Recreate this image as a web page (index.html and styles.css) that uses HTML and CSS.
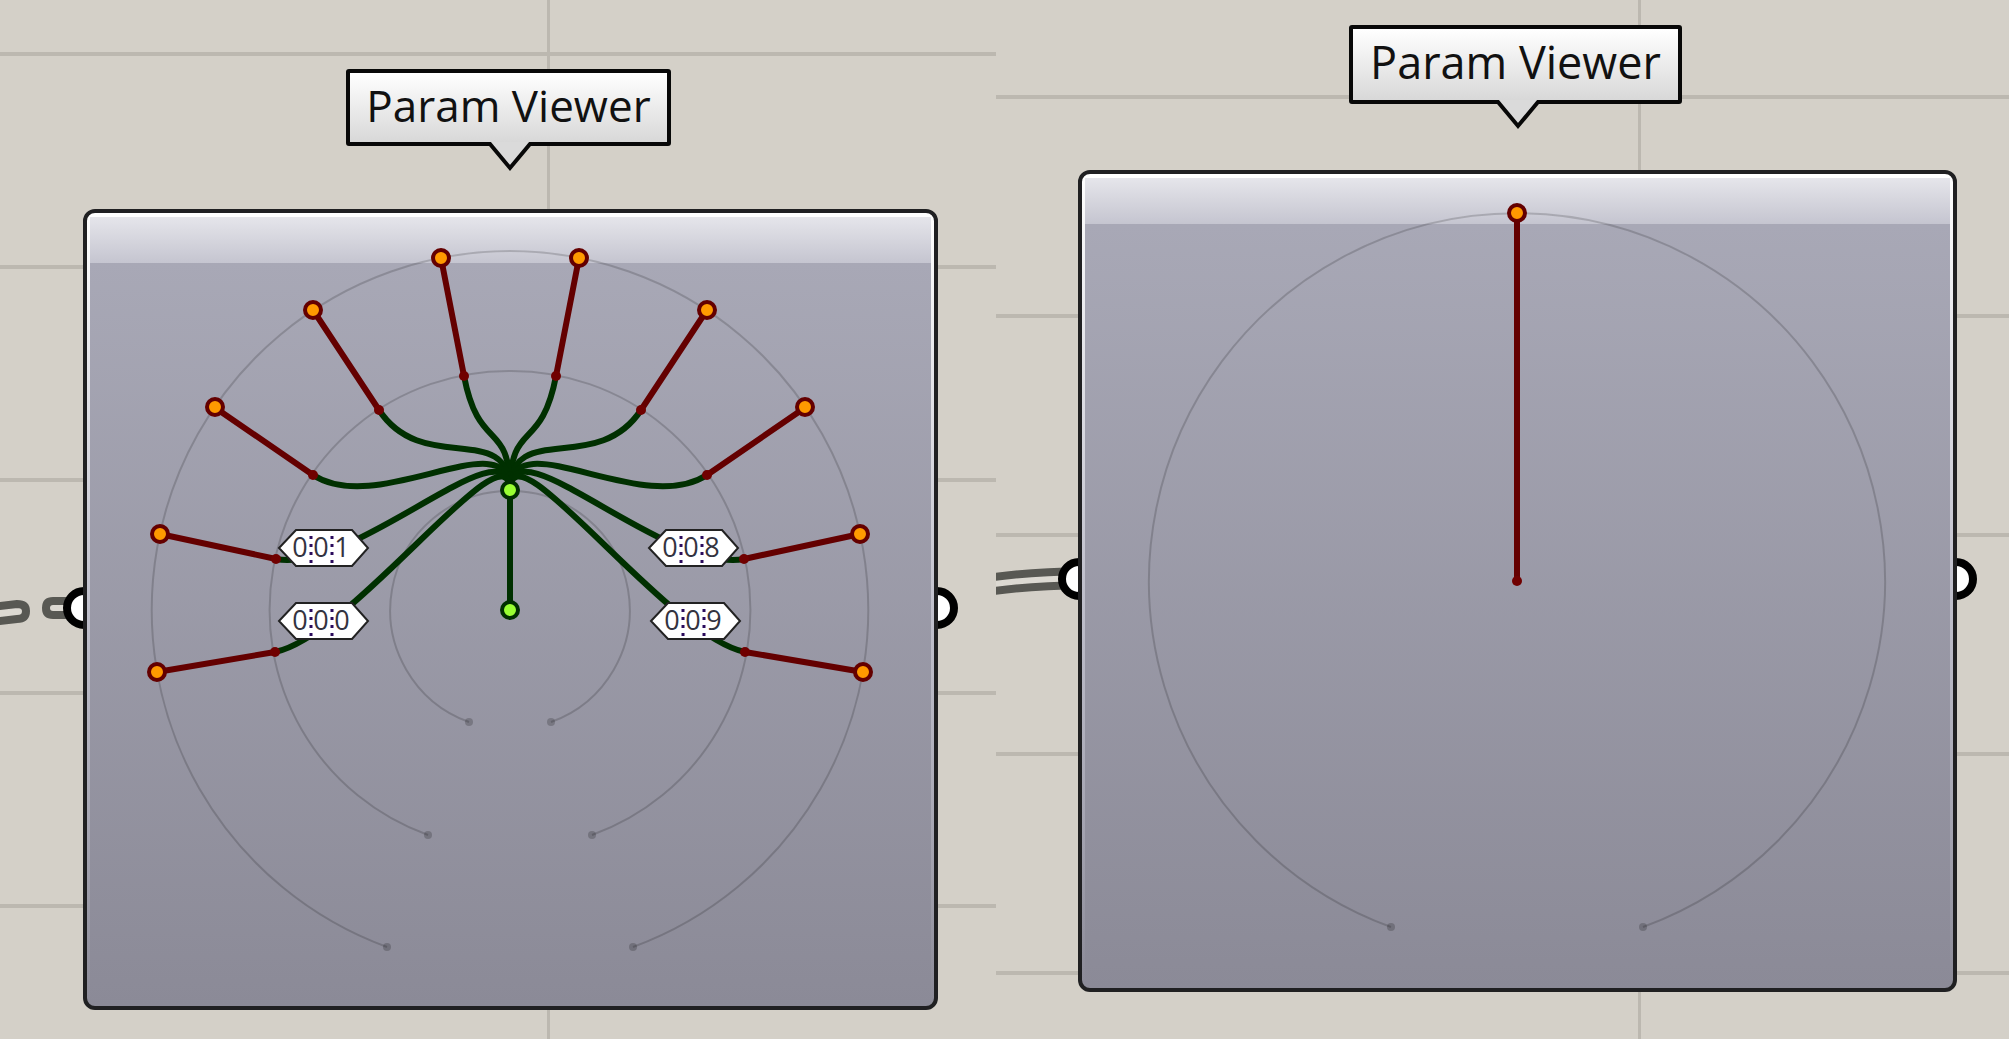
FILE: index.html
```html
<!DOCTYPE html>
<html lang="en">
<head>
<meta charset="utf-8">
<title>Param Viewer</title>
<link rel="stylesheet" href="styles.css">
</head>
<body>
<main class="board">
  <section class="pane pane-tree">
    <h2 class="callout">Param Viewer
      <svg class="pointer" viewBox="0 0 48 32" aria-hidden="true">
        <path class="pointer-fill" d="M4 0V2L24 26L44 2V0Z"/>
        <path class="pointer-edge" d="M2 2H4L24 26L44 2H46"/>
      </svg>
    </h2>
    <div class="node">
      <svg class="wire" viewBox="0 0 83 60" aria-hidden="true">
        <path d="M-8 28L17 25Q26 25 26 32Q26 40 17 40L-8 43Z"/>
        <path d="M90 22H53Q46 22 46 29Q46 36 53 36H90Z"/>
      </svg>
      <span class="port port-in"></span>
      <span class="port port-out"></span>
      <div class="card">
        <svg class="diagram" viewBox="87 212 847 793" role="img" aria-label="Data tree with ten branches">
          <defs>
            <g id="half">
              <path class="ring" d="M510 250A359 359 0 0 1 633 946M510 370A239 239 0 0 1 592 834M510 490A119 119 0 0 1 551 721"/>
              <g class="ring-end">
                <circle cx="633" cy="946" r="4"/><circle cx="592" cy="834" r="4"/><circle cx="551" cy="721" r="4"/>
              </g>
              <g class="branch">
                <path d="M510 490C510 418 541 453 556 375"/>
                <path d="M510 490C510 418 597 476 641 409"/>
                <path d="M510 490C510 418 641 517 707 474"/>
                <path d="M510 490C510 418 665 573 744 558"/>
                <path d="M510 490C510 418 666 635 745 651"/>
              </g>
              <path class="leaf" d="M556 375L579 257M641 409L707 309M707 474L806 406M744 558L860 533M745 651L863 671"/>
              <g class="joint">
                <circle cx="556" cy="375" r="5"/><circle cx="641" cy="409" r="5"/><circle cx="707" cy="474" r="5"/><circle cx="744" cy="558" r="5"/><circle cx="745" cy="651" r="5"/>
              </g>
              <g class="leaf-dot">
                <circle cx="579" cy="257" r="8"/><circle cx="707" cy="309" r="8"/><circle cx="805" cy="406" r="8"/><circle cx="860" cy="533" r="8"/><circle cx="863" cy="671" r="8"/>
              </g>
            </g>
            <g id="tag">
              <path class="tag-shape" d="M1 19L18 1H74L90 19L74 37H18Z"/>
              <path class="tag-split" d="M33 7V34M54 7V34"/>
            </g>
          </defs>
          <use href="#half"/>
          <use href="#half" transform="translate(1020 0) scale(-1 1)"/>
          <path class="trunk" d="M510 490V609"/>
          <circle class="trunk-dot" cx="510" cy="489" r="8"/>
          <circle class="trunk-dot" cx="510" cy="609" r="8"/>
          <g transform="translate(278 528)"><use href="#tag"/><text class="tag-text" y="28"><tspan x="22">0</tspan><tspan x="43">0</tspan><tspan x="64">1</tspan></text></g>
          <g transform="translate(278 601)"><use href="#tag"/><text class="tag-text" y="28"><tspan x="22">0</tspan><tspan x="43">0</tspan><tspan x="64">0</tspan></text></g>
          <g transform="translate(648 528)"><use href="#tag"/><text class="tag-text" y="28"><tspan x="22">0</tspan><tspan x="43">0</tspan><tspan x="64">8</tspan></text></g>
          <g transform="translate(650 601)"><use href="#tag"/><text class="tag-text" y="28"><tspan x="22">0</tspan><tspan x="43">0</tspan><tspan x="64">9</tspan></text></g>
        </svg>
      </div>
    </div>
  </section>

  <section class="pane pane-item">
    <h2 class="callout">Param Viewer
      <svg class="pointer" viewBox="0 0 48 32" aria-hidden="true">
        <path class="pointer-fill" d="M4 0V2L24 26L44 2V0Z"/>
        <path class="pointer-edge" d="M2 2H4L24 26L44 2H46"/>
      </svg>
    </h2>
    <div class="node">
      <svg class="wire" viewBox="0 0 83 60" aria-hidden="true">
        <path d="M-8 28Q30 22 90 21V35Q30 36 -8 42Z"/>
      </svg>
      <span class="port port-in"></span>
      <span class="port port-out"></span>
      <div class="card">
        <svg class="diagram" viewBox="1082 174 871 814" role="img" aria-label="Single item">
          <path class="ring" d="M1391 927A368 368 0 1 1 1643 927"/>
          <g class="ring-end"><circle cx="1391" cy="927" r="4"/><circle cx="1643" cy="927" r="4"/></g>
          <path class="leaf" d="M1517 213V581"/>
          <circle class="joint" cx="1517" cy="581" r="5"/>
          <g class="leaf-dot"><circle cx="1517" cy="213" r="8"/></g>
        </svg>
      </div>
    </div>
  </section>
</main>
</body>
</html>
```
FILE: styles.css
```css
* { box-sizing: border-box; }

body {
  margin: 0;
  background: #d4d0c8;
  font-family: "Open Sans", "Noto Sans", sans-serif;
}

.board {
  display: grid;
  grid-template-columns: 996fr 1013fr;
  min-height: 100vh;
}

.pane {
  --line: #bcb8b0;
  display: flex;
  flex-direction: column;
  overflow: hidden;
  background-image:
    linear-gradient(var(--line), var(--line)),
    linear-gradient(var(--line) 4px, transparent 4px);
  background-repeat: no-repeat, repeat-y;
}

.pane-tree {
  padding: 69px 58px 28px 83px;
  background-size: 3px 100%, 100% 213px;
  background-position: 547px 0, 0 52px;
}

.pane-item {
  padding: 25px 52px 44px 82px;
  background-size: 3px 100%, 100% 219px;
  background-position: 642px 0, 0 95px;
}

/* Name balloon above each component */
.callout {
  position: relative;
  align-self: center;
  margin: 0 4px 63px 0;
  padding: 4px 16px 9px;
  border: 4px solid #080808;
  border-radius: 3px;
  background: linear-gradient(#fff, #d8d8d8);
  color: #111;
  font-size: 44px;
  font-weight: 400;
  line-height: 56px;
  white-space: nowrap;
}

.pane-item .callout {
  margin-bottom: 66px;
  padding: 5px 17px 10px;
  font-size: 45px;
}

.pointer {
  position: absolute;
  top: 100%;
  left: calc(50% - 22px);
  width: 48px;
  height: 32px;
}

.pointer-fill { fill: #dadada; }
.pointer-edge { fill: none; stroke: #080808; stroke-width: 4; }

/* Component body with its grips */
.node {
  position: relative;
  isolation: isolate;
}

.card {
  border: 4px solid #202022;
  border-radius: 12px;
  background:
    linear-gradient(#fff, #fff) top / 100% 4px no-repeat,
    linear-gradient(#fff, #c0c0cc 50%, transparent) left / 3px 100% no-repeat,
    linear-gradient(#fff, #c0c0cc 50%, transparent) right / 3px 100% no-repeat,
    linear-gradient(#e8e8ed, #c5c5d0) top / 100% 50px no-repeat,
    linear-gradient(#aaaab8, #8b8a97);
}

.diagram {
  display: block;
  width: 100%;
  height: auto;
}

.port {
  position: absolute;
  z-index: -1;
  top: calc(50% - 23px);
  width: 42px;
  height: 42px;
  border: 8px solid #000;
  border-radius: 50%;
  background: #fff;
}

.port-in { left: -20px; }
.port-out { right: -20px; }

.wire {
  position: absolute;
  z-index: -1;
  top: calc(50% - 31px);
  right: 100%;
  width: 83px;
  height: 60px;
  overflow: visible;
  fill: #dcd9d2;
  stroke: #585853;
  stroke-width: 8;
}

/* Diagram strokes */
.ring { fill: none; stroke: #000; stroke-opacity: .17; stroke-width: 2; }
.ring-end { fill: #000; fill-opacity: .2; }
.branch, .trunk { fill: none; stroke: #003000; stroke-width: 6; }
.leaf { fill: none; stroke: #640000; stroke-width: 6; }
.joint { fill: #700000; }
.leaf-dot { fill: #ff9a00; stroke: #640000; stroke-width: 4; }
.trunk-dot { fill: #99ff33; stroke: #003000; stroke-width: 4; }
.tag-shape { fill: #fff; stroke: #222; stroke-width: 2; }
.tag-split { fill: none; stroke: #2a0a5c; stroke-width: 3; stroke-dasharray: 3 5; }
.tag-text { fill: #333340; font-size: 27px; text-anchor: middle; }
```
